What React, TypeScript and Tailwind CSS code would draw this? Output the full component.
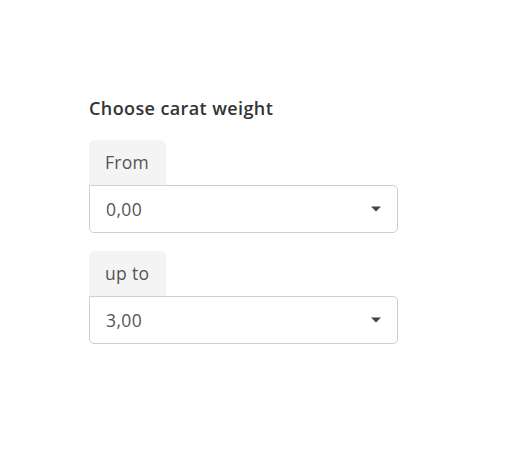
import React from 'react';

function Field({ label, value }: { label: string; value: string }) {
  return (
    <div className="flex flex-col items-start">
      <div className="w-[77px] h-[45px] bg-[#f4f4f4] rounded-t-[6px] flex items-center pl-[16px] text-[17.5px] tracking-[0.3px] text-[#555]">
        {label}
      </div>
      <div className="w-[309px] h-[48px] border border-[#cfcfcf] rounded-b-[5px] rounded-tr-[5px] flex items-center justify-between pl-[16px] pr-[16px] text-[17.5px] tracking-[0.4px] text-[#555]">
        <span>{value}</span>
        <svg width="10" height="6" viewBox="0 0 10 6">
          <path d="M0 0.5 L10 0.5 L5 5.5 Z" fill="#444" />
        </svg>
      </div>
    </div>
  );
}

export default function App() {
  return (
    <div className="w-[515px] h-[463px] bg-white pt-[96px] pl-[89px]" style={{ fontFamily: '"Open Sans", sans-serif' }}>
      <h2 className="text-[18px] font-semibold tracking-[0.4px] text-[#333] leading-[24px]">Choose carat weight</h2>
      <div className="mt-[20px] flex flex-col gap-[18px]">
        <Field label="From" value="0,00" />
        <Field label="up to" value="3,00" />
      </div>
    </div>
  );
}
